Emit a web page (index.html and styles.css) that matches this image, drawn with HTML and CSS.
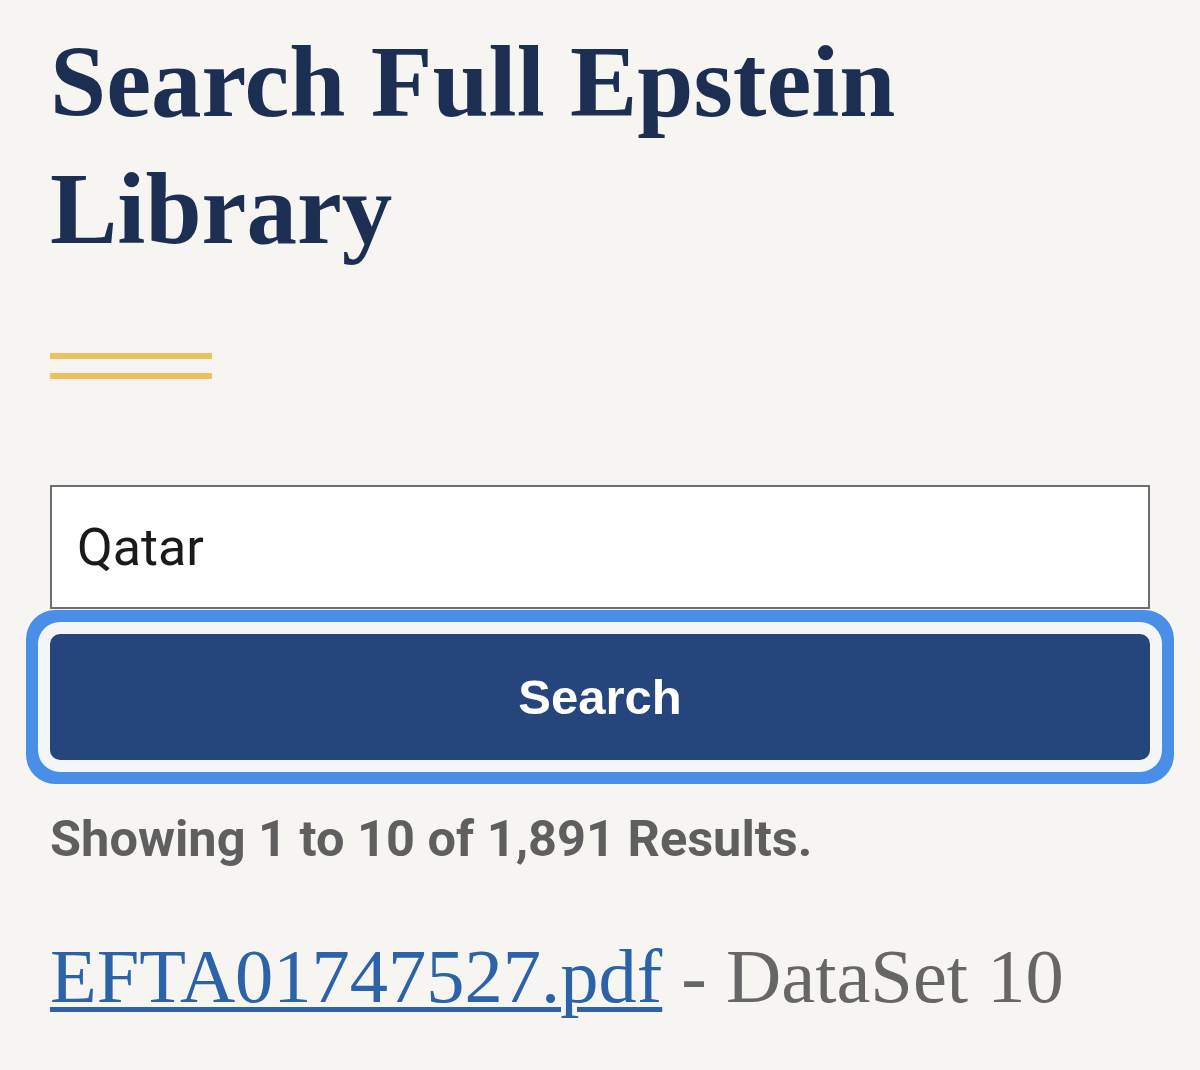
FILE: index.html
```html
<!DOCTYPE html>
<html lang="en">
<head>
<meta charset="utf-8">
<title>Search Full Epstein Library</title>
<link rel="stylesheet" href="styles.css">
</head>
<body>
<main class="page">
  <h1 class="title">Search Full Epstein Library</h1>
  <div class="divider"><span class="bar"></span><span class="bar"></span></div>
  <form class="search-form">
    <input class="search-input" type="text" value="Qatar" aria-label="Search">
    <button class="search-btn" type="button">Search</button>
  </form>
  <p class="summary">Showing 1 to 10 of 1,891 Results.</p>
  <p class="result"><a class="result-link" href="#">EFTA01747527.pdf</a> - DataSet 10</p>
</main>
</body>
</html>
```

FILE: styles.css
```css
html, body {
  margin: 0;
  padding: 0;
  background: #f6f5f1;
}

.page {
  padding: 0 50px;
  width: 1100px;
}

.title {
  margin: 19px 0 0;
  font-family: "Liberation Serif", "Times New Roman", serif;
  font-weight: 700;
  font-size: 101px;
  line-height: 127px;
  color: #1c2e52;
}

.divider {
  margin-top: 80px;
  width: 162px;
  display: flex;
  flex-direction: column;
  gap: 14px;
}

.bar {
  display: block;
  height: 6px;
  background: #eec05e;
}

.search-form {
  margin-top: 106px;
  display: flex;
  flex-direction: column;
  gap: 25px;
}

.search-input {
  box-sizing: border-box;
  width: 1100px;
  height: 124px;
  margin: 0;
  padding: 0 25px;
  border: 2px solid #6e6e6e;
  border-radius: 0;
  background: #ffffff;
  font-family: Roboto, "Noto Sans", sans-serif;
  font-size: 52px;
  color: #1a1a1a;
  outline: none;
}

.search-btn {
  box-sizing: border-box;
  width: 1100px;
  height: 126px;
  margin: 0;
  border: 0;
  border-radius: 10px;
  background: #26457d;
  color: #ffffff;
  font-family: "Liberation Sans", Arial, sans-serif;
  font-weight: 700;
  font-size: 49px;
  box-shadow: 0 0 0 12px #f3f5f8, 0 0 0 24px #4a8fe7;
}

.summary {
  margin: 49px 0 0;
  font-family: Roboto, "Noto Sans", sans-serif;
  font-weight: 700;
  font-size: 50.5px;
  line-height: 60px;
  color: #5f5f5f;
}

.result {
  margin: 63px 0 0;
  font-family: "Liberation Serif", "Times New Roman", serif;
  font-size: 76.5px;
  line-height: 90px;
  color: #666666;
}

.result-link {
  color: #2b62a8;
  text-decoration: underline;
  text-decoration-thickness: 5px;
  text-underline-offset: 5px;
}
```
